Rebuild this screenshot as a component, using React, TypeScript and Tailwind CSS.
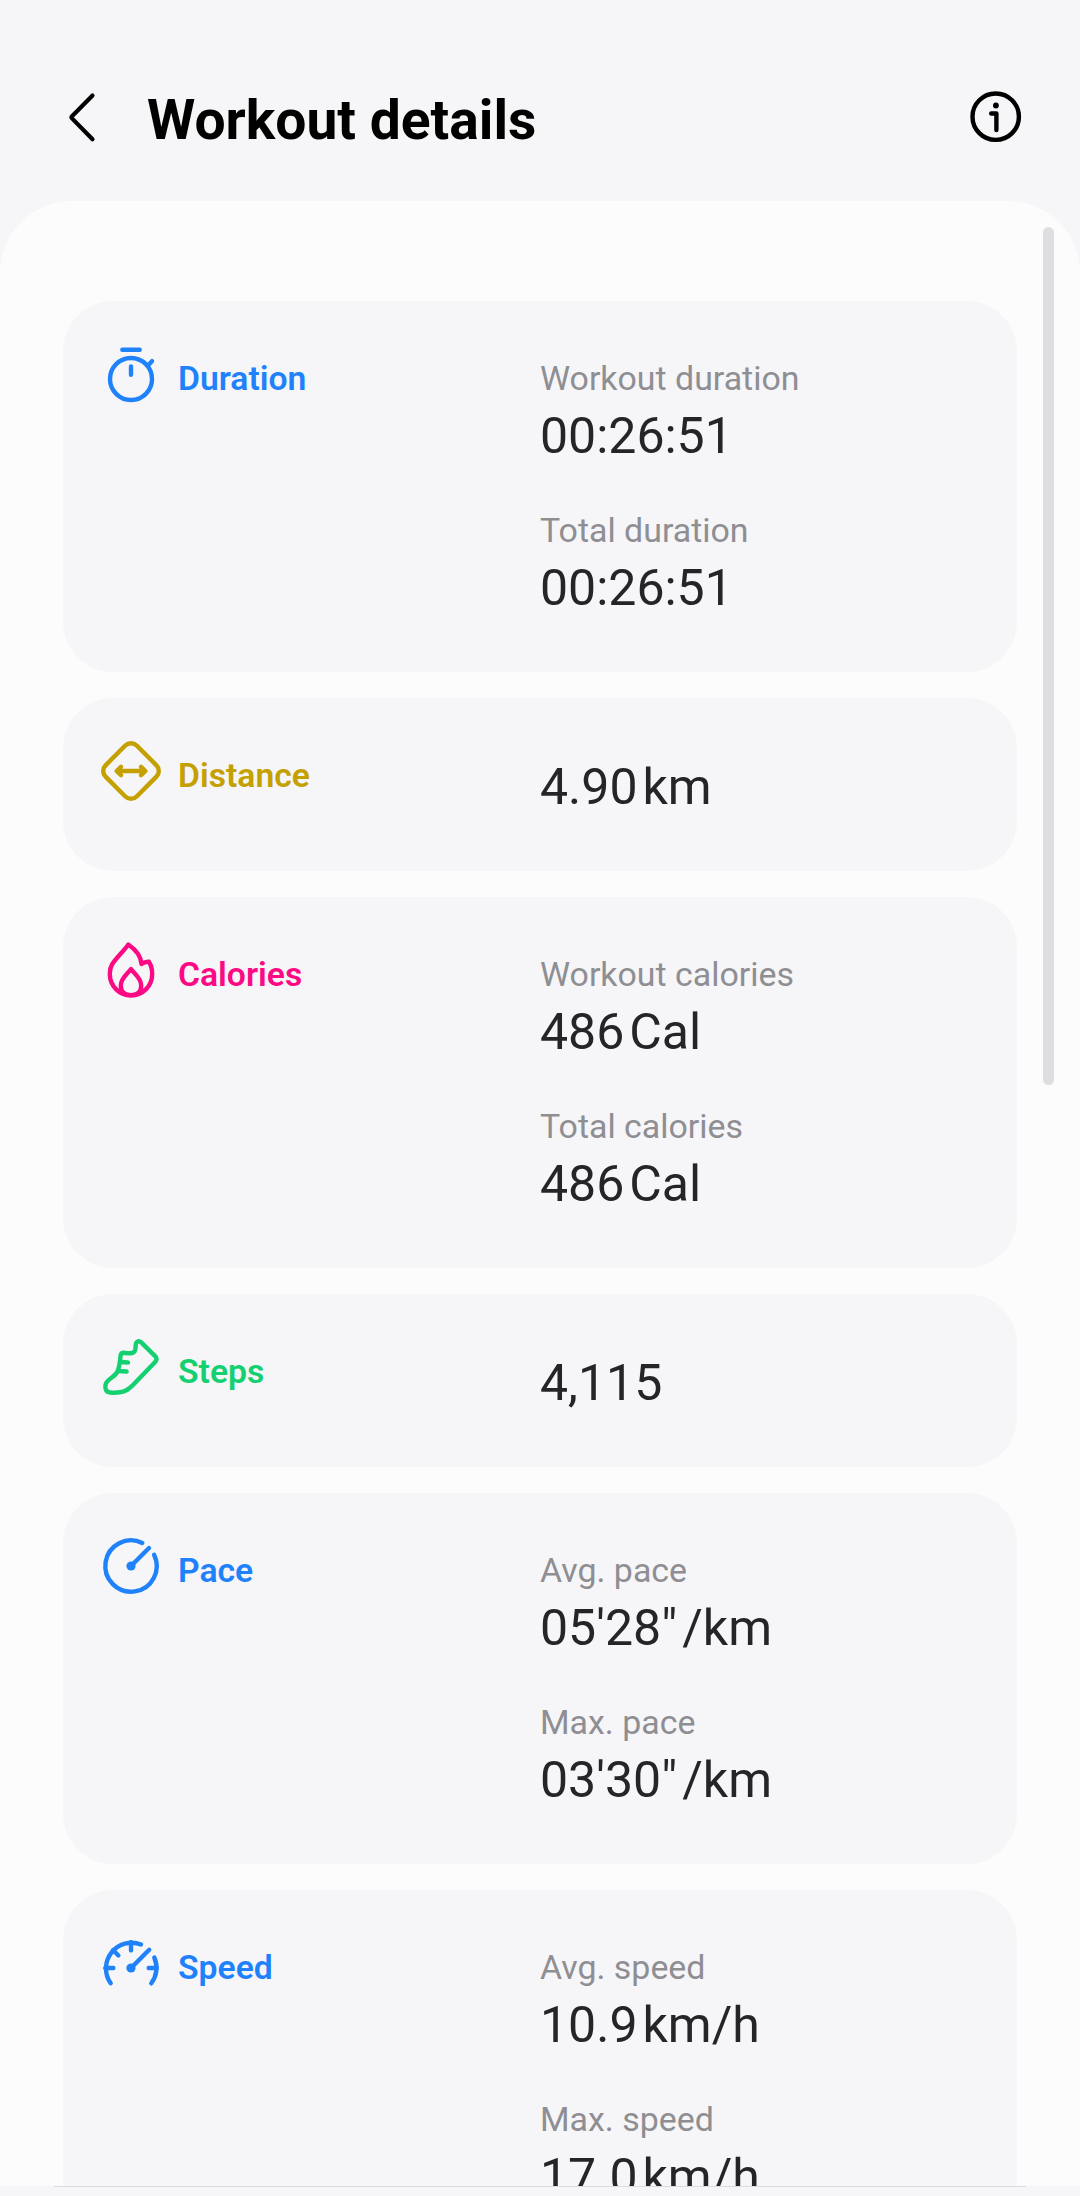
import React from "react";

type Stat = {
  label?: string;
  value: string;
  unit?: string;
};

type Section = {
  title: string;
  color: string;
  icon: React.ReactNode;
  stats: Stat[];
};

const sections: Section[] = [
  {
    title: "Duration",
    color: "text-[#1f82fb]",
    icon: (
      <>
        <circle cx="36" cy="41" r="21" />
        <path d="M27.3 11.7H44.7M36 28.5V36.8M53.3 27L57 23.2" />
      </>
    ),
    stats: [
      { label: "Workout duration", value: "00:26:51" },
      { label: "Total duration", value: "00:26:51" },
    ],
  },
  {
    title: "Distance",
    color: "text-[#c4a000]",
    icon: (
      <>
        <rect x="14" y="14" width="44" height="44" rx="8" transform="rotate(45 36 36)" />
        <path d="M22 36H50M26 31.8L21.6 36L26 40.2M46 31.8L50.4 36L46 40.2" />
      </>
    ),
    stats: [{ value: "4.90", unit: "km" }],
  },
  {
    title: "Calories",
    color: "text-[#fb0a84]",
    icon: (
      <>
        <path d="M33.3 10.5C28 18 21 24 17 30.5C15.5 33 14.8 36 14.8 39.8C14.8 52 24 61.3 36 61.3C48 61.3 57.2 52 57.2 40C57.2 35 56 31 54 27.8C51 27.5 48.5 28.6 46.5 30C46 22.5 40.5 15.5 33.3 10.5Z" />
        <path d="M36 35C32.5 40 25.8 44 25.8 51.5C25.8 57.5 30 61.3 36 61.3C42 61.3 46.2 57.5 46.2 51.5C46.2 44 39.5 40 36 35Z" />
      </>
    ),
    stats: [
      { label: "Workout calories", value: "486", unit: "Cal" },
      { label: "Total calories", value: "486", unit: "Cal" },
    ],
  },
  {
    title: "Steps",
    color: "text-[#14d070]",
    icon: (
      <>
        <path d="M46.2 11.4L60.6 25.6Q62.4 28 60.6 30.4L38.5 53.5C34 58 31 60.5 25 61.3Q20 62 15 61.5C10.5 61 9.8 57 10.6 53.5C12 48 19 46.5 22 41.5C24.5 37 25 31.5 25.5 25Q25.8 21.6 29 21.8C33 22.3 38.5 23.5 40 19.5C41 16.5 40.2 14.5 41.2 11.8Q43.5 8.8 46.2 11.4Z" />
        <path d="M25 31L33 31.5M23 40L31.6 40.5" />
      </>
    ),
    stats: [{ value: "4,115" }],
  },
  {
    title: "Pace",
    color: "text-[#1f82fb]",
    icon: (
      <>
        <path d="M47.3 12.9A25.7 25.7 0 1 0 59.1 24.7M36 36L54 18" />
        <circle cx="36" cy="36" r="4.6" fill="currentColor" stroke="none" />
      </>
    ),
    stats: [
      { label: "Avg. pace", value: "05'28\"", unit: "/km" },
      { label: "Max. pace", value: "03'30\"", unit: "/km" },
    ],
  },
  {
    title: "Speed",
    color: "text-[#1f82fb]",
    icon: (
      <>
        <path d="M46 17.5A25.7 25.7 0 0 0 15.7 56.3M59.3 30.5A25.7 25.7 0 0 1 56.3 56.3" />
        <path d="M10.3 41H18.4M36 15.3V23.4M18 23L23.4 28.5M61.7 41H53.7M36 41L54.2 22.8" />
        <circle cx="36" cy="41" r="4.6" fill="currentColor" stroke="none" />
      </>
    ),
    stats: [
      { label: "Avg. speed", value: "10.9", unit: "km/h" },
      { label: "Max. speed", value: "17.0", unit: "km/h" },
    ],
  },
];

const StatItem = ({ label, value, unit }: Stat) => (
  <div>
    {label && (
      <div className="mb-[7px] text-[33.9px] leading-[40px] text-[#8e8e93]">
        {label}
      </div>
    )}
    <div className="flex gap-[5px] text-[50px] leading-[60px] text-[#252528]">
      <span>{value}</span>
      {unit && <span>{unit}</span>}
    </div>
  </div>
);

const Card = ({ title, color, icon, stats }: Section) => {
  const single = stats.length === 1;
  return (
    <section
      className={`flex shrink-0 rounded-[50px] bg-[#f6f6f8] ${
        single ? "h-[173px]" : "h-[371px]"
      }`}
    >
      <div className={`flex w-[477px] pt-[37px] pl-8 ${color}`}>
        <svg
          viewBox="0 0 72 72"
          className="h-[72px] w-[72px]"
          fill="none"
          stroke="currentColor"
          strokeWidth="4.4"
          strokeLinecap="round"
          strokeLinejoin="round"
        >
          {icon}
        </svg>
        <h2 className="mt-[21px] ml-[11px] text-[33.7px] leading-[40px] font-semibold">
          {title}
        </h2>
      </div>
      <div className={`flex flex-col gap-[45px] ${single ? "pt-[59px]" : "pt-[58px]"}`}>
        {stats.map((stat, i) => (
          <StatItem key={i} {...stat} />
        ))}
      </div>
    </section>
  );
};

const App = () => {
  return (
    <div className="flex h-[2196px] w-[1080px] flex-col overflow-hidden bg-[#f6f6f8] font-['Roboto',sans-serif]">
      <header className="flex h-[201px] shrink-0 items-start pt-[81px]">
        <button className="ml-[46px] h-[72px] w-[72px]" aria-label="Back">
          <svg
            viewBox="0 0 72 72"
            fill="none"
            stroke="black"
            strokeWidth="4.2"
            strokeLinecap="round"
            strokeLinejoin="round"
          >
            <path d="M46.5 14.5L26 35.2Q25 36.3 26 37.4L46.5 58.3" />
          </svg>
        </button>
        <h1 className="ml-[29px] pt-[7px] text-[55.2px] leading-[64px] font-bold text-black">
          Workout details
        </h1>
        <button className="mr-[48px] ml-auto h-[72px] w-[72px]" aria-label="Info">
          <svg
            viewBox="0 0 72 72"
            fill="none"
            stroke="black"
            strokeWidth="4.4"
            strokeLinecap="round"
            strokeLinejoin="round"
          >
            <circle cx="35.7" cy="35.7" r="23.2" />
            <path d="M31.2 32.5H36.4V49" />
            <circle cx="35.9" cy="24.5" r="2.9" fill="black" stroke="none" />
          </svg>
        </button>
      </header>
      <main className="relative flex h-[1985px] shrink-0 flex-col gap-[26px] overflow-hidden rounded-t-[72px] bg-[#fcfcfc] px-[63px] pt-[100px]">
        {sections.map((section) => (
          <Card key={section.title} {...section} />
        ))}
        {/* scroll indicator */}
        <div className="absolute top-[26px] right-[26px] h-[858px] w-[11px] rounded-full bg-[#dedee0]" />
      </main>
      <div className="mx-[54px] h-px shrink-0 bg-[#dcdcde]" />
    </div>
  );
};

export default App;
